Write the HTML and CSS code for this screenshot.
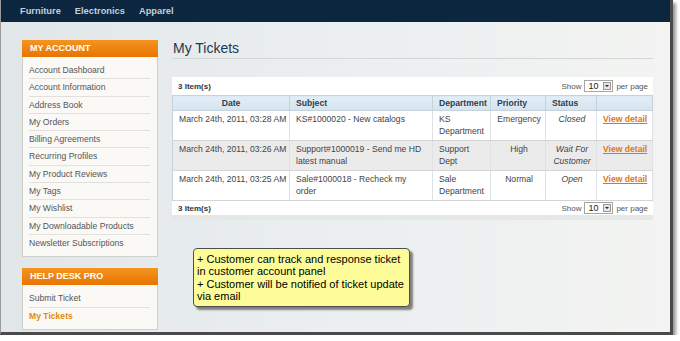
FILE: index.html
```html
<!DOCTYPE html>
<html lang="en">
<head>
    <meta charset="UTF-8">
    <title>My Tickets</title>
    <link rel="stylesheet" href="styles.css">
</head>
<body>

<div class="window">
    <nav class="top-nav">
        <a href="#">Furniture</a>
        <a href="#">Electronics</a>
        <a href="#">Apparel</a>
    </nav>

    <div class="page">
        <aside class="sidebar">
            <div class="block">
                <div class="block-title">MY ACCOUNT</div>
                <ul>
                    <li><a href="#">Account Dashboard</a></li>
                    <li><a href="#">Account Information</a></li>
                    <li><a href="#">Address Book</a></li>
                    <li><a href="#">My Orders</a></li>
                    <li><a href="#">Billing Agreements</a></li>
                    <li><a href="#">Recurring Profiles</a></li>
                    <li><a href="#">My Product Reviews</a></li>
                    <li><a href="#">My Tags</a></li>
                    <li><a href="#">My Wishlist</a></li>
                    <li><a href="#">My Downloadable Products</a></li>
                    <li><a href="#">Newsletter Subscriptions</a></li>
                </ul>
            </div>
            <div class="block">
                <div class="block-title">HELP DESK PRO</div>
                <ul>
                    <li><a href="#">Submit Ticket</a></li>
                    <li class="current"><strong>My Tickets</strong></li>
                </ul>
            </div>
        </aside>

        <main class="content">
            <h1>My Tickets</h1>

            <div class="pager">
                <span class="amount">3 Item(s)</span>
                <span class="limiter">Show <span class="select">10<span class="arrow"></span></span> per page</span>
            </div>

            <table class="tickets">
                <colgroup>
                    <col style="width:117px">
                    <col style="width:143px">
                    <col style="width:58px">
                    <col style="width:55px">
                    <col style="width:51px">
                    <col>
                </colgroup>
                <thead>
                    <tr>
                        <th class="center">Date</th>
                        <th>Subject</th>
                        <th>Department</th>
                        <th>Priority</th>
                        <th>Status</th>
                        <th></th>
                    </tr>
                </thead>
                <tbody>
                    <tr>
                        <td class="nowrap">March 24th, 2011, 03:28 AM</td>
                        <td>KS#1000020 - New catalogs</td>
                        <td>KS Department</td>
                        <td class="center">Emergency</td>
                        <td class="center status">Closed</td>
                        <td class="nowrap"><a href="#">View detail</a></td>
                    </tr>
                    <tr class="even">
                        <td class="nowrap">March 24th, 2011, 03:26 AM</td>
                        <td>Support#1000019 - Send me HD latest manual</td>
                        <td>Support Dept</td>
                        <td class="center">High</td>
                        <td class="center status">Wait For Customer</td>
                        <td class="nowrap"><a href="#">View detail</a></td>
                    </tr>
                    <tr>
                        <td class="nowrap">March 24th, 2011, 03:25 AM</td>
                        <td>Sale#1000018 - Recheck my order</td>
                        <td>Sale Department</td>
                        <td class="center">Normal</td>
                        <td class="center status">Open</td>
                        <td class="nowrap"><a href="#">View detail</a></td>
                    </tr>
                </tbody>
            </table>

            <div class="pager pager-bottom">
                <span class="amount">3 Item(s)</span>
                <span class="limiter">Show <span class="select">10<span class="arrow"></span></span> per page</span>
            </div>

            <!-- callout note -->
            <div class="note">
                + Customer can track and response ticket in customer account panel<br>
                + Customer will be notified of ticket update via email
            </div>
        </main>
    </div>
</div>

</body>
</html>
```
FILE: styles.css
```css
body {
    margin: 0;
    padding: 0;
    background: #fff;
    font-family: "Liberation Sans", Arial, sans-serif;
}
.window {
    width: 669px;
    height: 332px;
    border-left: 1px solid #9a9a9a;
    border-right: 3px solid #4a4a4a;
    border-bottom: 3px solid #4a4a4a;
    box-shadow: 3px 3px 3px rgba(0, 0, 0, 0.4);
    background: linear-gradient(90deg, #e1e6e9 0%, #eaeef0 45%, #f3f4f2 100%);
    overflow: hidden;
}
.top-nav {
    height: 22px;
    background: #0c2640;
    display: flex;
    align-items: center;
    gap: 14px;
    padding-left: 19px;
}
.top-nav a {
    color: #c3cfda;
    text-decoration: none;
    font-weight: bold;
    font-size: 9.3px;
}
.page {
    display: flex;
    gap: 14px;
    padding: 18px 0 0 21px;
}
.sidebar {
    width: 136px;
    display: flex;
    flex-direction: column;
    gap: 11px;
}
.block {
    background: #faf9f6;
    border: 1px solid #cfcfcc;
}
.block-title {
    height: 17px;
    line-height: 17px;
    margin: -1px -1px 0;
    padding-left: 8px;
    background: linear-gradient(#f59420, #e87400);
    color: #fff;
    font-weight: bold;
    font-size: 9px;
}
.block ul {
    list-style: none;
    margin: 0;
    padding: 5px 7px 5px 6px;
}
.block li {
    line-height: 16.3px;
    font-size: 8.6px;
    border-bottom: 1px solid #e2e0dc;
}
.block li:last-child {
    border-bottom: none;
}
.block li a {
    color: #555;
    text-decoration: none;
}
.block li.current {
    color: #e8890c;
}
.content {
    width: 481px;
}
.content h1 {
    margin: 0;
    font-size: 14px;
    font-weight: normal;
    line-height: 16px;
    color: #22384d;
    padding: 0 0 2px 1px;
    border-bottom: 1px solid #d3d6d4;
}
.pager {
    margin-top: 18px;
    height: 18px;
    background: #fff;
    display: flex;
    align-items: center;
    justify-content: space-between;
    padding: 0 5px 0 6px;
    font-size: 8px;
    color: #333;
}
.pager .amount {
    font-weight: bold;
}
.limiter {
    display: flex;
    align-items: center;
    gap: 3px;
    color: #555;
}
.select {
    width: 24px;
    height: 10px;
    border: 1px solid #a5a5a5;
    background: #fff;
    display: inline-flex;
    align-items: center;
    justify-content: space-between;
    padding-left: 3px;
    font-size: 9px;
    color: #222;
}
.select .arrow {
    width: 8px;
    height: 8px;
    margin-right: 1px;
    background: #e4e4e4;
    border: 1px solid #999;
    box-sizing: border-box;
    position: relative;
}
.select .arrow::after {
    content: "";
    position: absolute;
    left: 1px;
    top: 2px;
    border-left: 2px solid transparent;
    border-right: 2px solid transparent;
    border-top: 2px solid #222;
}
.pager-bottom {
    margin-top: 0;
    height: 14px;
    border-bottom: 5px solid #e6e8e8;
}
.tickets {
    width: 481px;
    table-layout: fixed;
    border-collapse: collapse;
    border: 1px solid #c4d2dc;
    background: #fff;
    font-size: 8.6px;
    color: #444;
}
.tickets th {
    height: 14px;
    padding: 0 6px;
    background: linear-gradient(#e3edf5, #d6e4ef);
    border-right: 1px solid #c4d2dc;
    border-bottom: 1px solid #c4d2dc;
    color: #2c3e50;
    font-weight: bold;
    text-align: left;
}
.tickets td {
    padding: 2px 4px 3px 6px;
    line-height: 12px;
    vertical-align: top;
    border-right: 1px solid #dde2e6;
    border-bottom: 1px solid #d4d4d4;
}
.tickets td.nowrap {
    white-space: nowrap;
    overflow: hidden;
}
.tickets .center {
    text-align: center;
}
.tickets tr.even td {
    background: #ebebeb;
}
.tickets .status {
    font-style: italic;
}
.tickets td a {
    color: #e2760c;
    font-weight: bold;
}
.note {
    width: 208px;
    margin: 28px 0 0 21px;
    padding: 4px 4px 4px 3px;
    background: #fdfc98;
    border: 1px solid #4d4d4d;
    border-radius: 4px;
    box-shadow: 3px 3px 2px #808080;
    font-size: 11px;
    line-height: 12.3px;
    color: #000;
}
```
